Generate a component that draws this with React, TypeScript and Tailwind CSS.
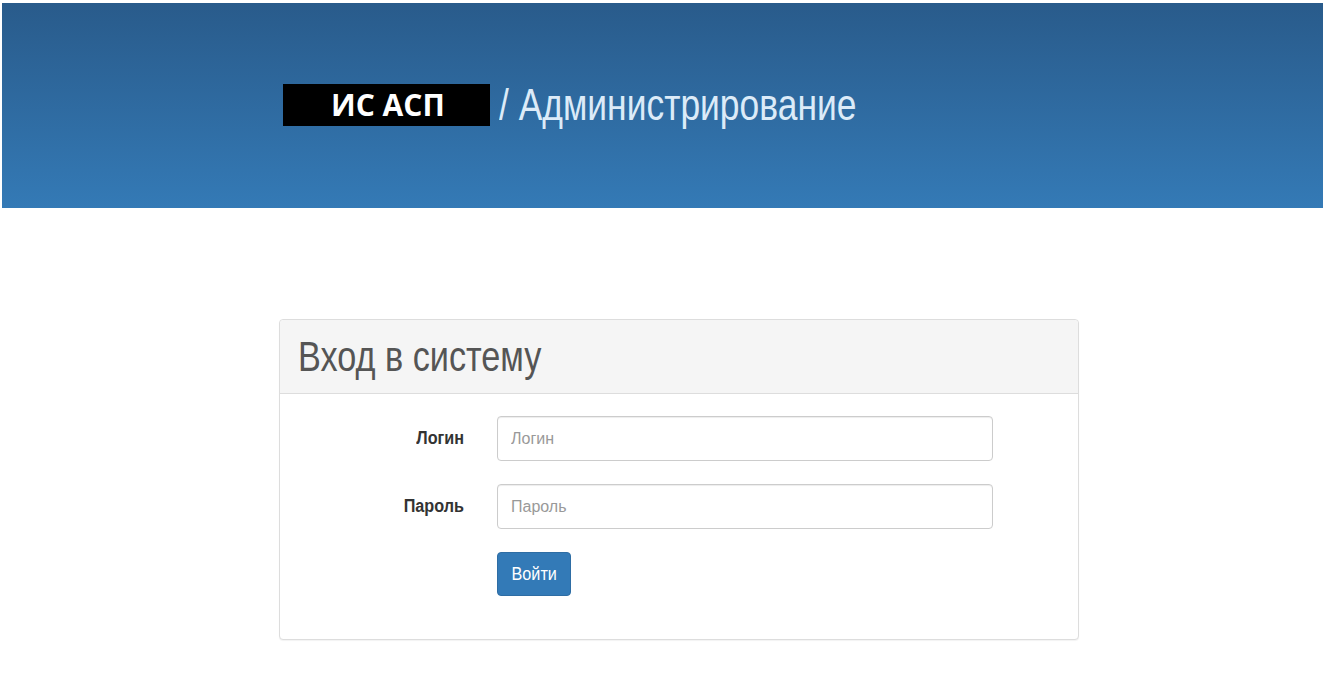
export default function App() {
  const sans = "font-['Liberation_Sans',Arial,sans-serif]";
  const inputCls =
    "ml-[33px] h-[45px] w-[496px] rounded-[4px] border border-[#cccccc] px-[13px] text-[16px] text-[#555555] shadow-[inset_0_1px_1px_rgba(0,0,0,0.075)] outline-none placeholder:text-[#999999]";

  return (
    <div className={`${sans} min-h-[685px] bg-white pt-[3px]`}>
      <header className="ml-[2px] h-[205px] bg-gradient-to-b from-[#295b8b] to-[#347ab6]">
        <div className="flex items-center pl-[281px] pt-[80px]">
          <div className="flex h-[42px] w-[207px] items-center bg-black pl-[48px]">
            <span className="font-['Open_Sans',sans-serif] text-[30px] font-bold leading-none text-white">
              ИС АСП
            </span>
          </div>
          <h1 className="ml-[9px] inline-block origin-left scale-x-[0.805] whitespace-nowrap text-[44px] leading-none text-[#dcebf8]">
            / Администрирование
          </h1>
        </div>
      </header>

      <main className="ml-[279px] mt-[111px] w-[800px] pb-[45px]">
        <div className="rounded-[4px] border border-[#dddddd] bg-white shadow-[0_1px_1px_rgba(0,0,0,0.05)]">
          <div className="flex h-[74px] items-center rounded-t-[4px] border-b border-[#dddddd] bg-[#f5f5f5] px-[18px]">
            <h2 className="inline-block origin-left scale-x-[0.815] whitespace-nowrap text-[42px] leading-none text-[#555555]">
              Вход в систему
            </h2>
          </div>

          <form className="flex flex-col gap-[23px] pb-[43px] pt-[22px]">
            <div className="flex items-center">
              <label className="w-[184px] text-right text-[18px] font-bold text-[#333333]">
                <span className="inline-block origin-right scale-x-[0.9]">Логин</span>
              </label>
              <input placeholder="Логин" className={inputCls} />
            </div>
            <div className="flex items-center">
              <label className="w-[184px] text-right text-[18px] font-bold text-[#333333]">
                <span className="inline-block origin-right scale-x-[0.9]">Пароль</span>
              </label>
              <input type="password" placeholder="Пароль" className={inputCls} />
            </div>
            <div className="pl-[217px]">
              <button
                type="button"
                className="h-[44px] w-[74px] rounded-[4px] border border-[#2e6da4] bg-[#337ab7] text-[18px] text-white"
              >
                <span className="inline-block scale-x-[0.9]">Войти</span>
              </button>
            </div>
          </form>
        </div>
      </main>
    </div>
  );
}
